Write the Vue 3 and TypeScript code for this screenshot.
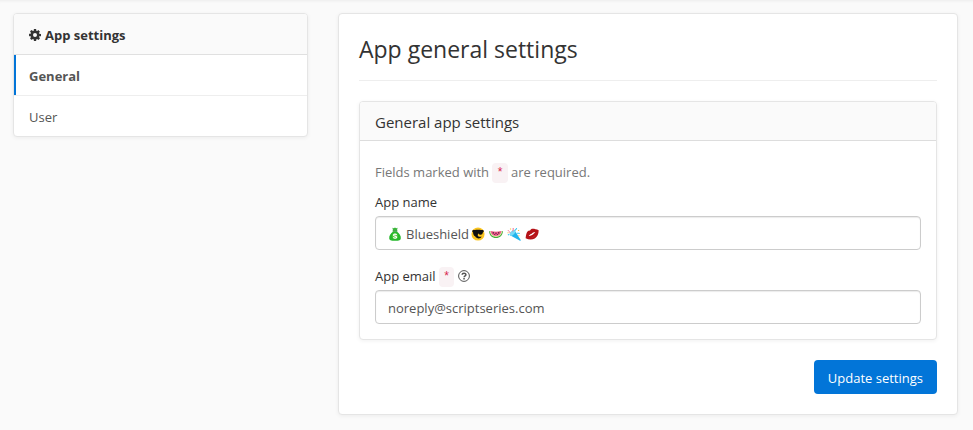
<script setup lang="ts">
import { ref } from 'vue'

interface MenuItem {
  id: string
  label: string
}

const menu: MenuItem[] = [
  { id: 'general', label: 'General' },
  { id: 'user', label: 'User' },
]

const active = ref('general')
const appName = ref('Blueshield')
const appEmail = ref('noreply@scriptseries.com')
</script>

<template>
  <div class="page">
    <nav class="panel sidebar" aria-labelledby="menu-title">
      <div id="menu-title" class="sidebar-head">
        <svg class="cog" viewBox="0 0 1536 1536" aria-hidden="true">
          <path
            fill="currentColor"
            fill-rule="evenodd"
            d="M1024 768a256 256 0 1 0-512 0 256 256 0 0 0 512 0zM1536 659v222c0 15-12 32-28 34l-185 28c-10 32-23 63-39 92 34 48 70 93 107 138 6 7 9 15 9 23 0 9-2 16-8 23-24 33-159 180-194 180-9 0-18-4-26-9l-138-108c-29 15-60 28-91 38-7 60-13 126-28 186-4 16-17 28-34 28H659c-17 0-32-13-34-29l-28-184c-31-10-61-22-90-37l-141 107c-7 6-16 9-25 9s-18-4-25-11c-53-48-123-111-165-169-5-7-7-15-7-23s3-16 8-23c34-46 71-90 105-137-17-32-31-64-41-97l-183-27c-17-3-29-18-29-34V657c0-15 12-32 27-34l186-28c9-32 23-63 39-93-34-48-71-93-107-138-6-7-9-14-9-23s3-16 8-23c24-33 159-179 194-179 9 0 18 4 26 10l138 107c29-15 60-28 91-38 7-60 13-126 28-186 4-16 17-28 34-28h222c17 0 32 13 34 29l28 184c31 10 61 22 90 37l142-107c7-6 15-9 24-9s18 4 25 10c53 49 123 112 165 171 5 6 7 14 7 22s-3 16-8 23c-34 46-71 90-105 137 17 32 31 64 41 96l183 28c17 3 29 18 29 34z"
          />
        </svg>
        <span>App settings</span>
      </div>
      <a
        v-for="item in menu"
        :key="item.id"
        :href="'#' + item.id"
        class="menu-item"
        :class="{ active: active === item.id }"
        @click.prevent="active = item.id"
        >{{ item.label }}</a
      >
    </nav>

    <main class="panel content">
      <h1>App general settings</h1>
      <form @submit.prevent>
        <section class="panel card">
          <h2>General app settings</h2>
          <div class="card-body">
            <p class="note">Fields marked with <code>*</code> are required.</p>

            <div class="field">
              <label for="app-name">App name</label>
              <div class="control emoji-control">
                <svg class="emoji" viewBox="0 0 16 16" aria-hidden="true">
                  <path fill="#3cb53c" d="M5 .8 6.6 1.4 8 .6l1.4.8L11 .8 10.2 4H5.8z" />
                  <path fill="#26b82c" d="M6 5h4c3 2 5 5 4.600 8-.3 2-1.600 2.600-6.600 2.600S1.700 15 1.400 13C1 10 3 7 6 5z" />
                  <path fill="#178c20" d="M5.300 3.800h5.400v1.400H5.300z" />
                  <circle cx="8" cy="10.400" r="3.400" fill="#4fca3a" />
                  <path fill="none" stroke="#fff" stroke-width="1.300" d="M10 8.900C8.800 7.800 6.200 8 6.300 9.400c.1 1.300 3.600.8 3.600 2.200 0 1.300-2.700 1.500-3.900.3" />
                </svg>
                <input id="app-name" v-model="appName" class="name-input" type="text" />
                <svg class="emoji" viewBox="0 0 16 16" aria-hidden="true">
                  <circle cx="8" cy="8" r="7.500" fill="#fbc520" />
                  <path fill="#101010" d="M1.500 4c3-1 10-1 13 0v1.300l-.8.700c-.4 2-1.400 2.800-2.700 2.800-1.400 0-2.100-.6-2.600-1.700L7.700 9c-.2 1.700 1.500 2.600 4.500 1.900-1 2.800-5.900 3-7.500-.2C3 10 2.600 8.300 2.300 6l-.8-.700z" />
                </svg>
                <svg class="emoji" viewBox="0 0 16 16" aria-hidden="true">
                  <path fill="#43a837" d="M0 4.500c4 1.500 12 1.500 16 0-.4 5-3.600 8-8 8s-7.600-3-8-8z" />
                  <path fill="#dcecae" d="M.8 4.500c4 1.200 10.400 1.200 14.400 0-.6 4.400-3.300 6.800-7.200 6.800S1.400 8.900.8 4.500z" />
                  <path fill="#f6578f" d="M1.800 4.600c4 1 8.400 1 12.400 0-.7 3.700-2.900 5.600-6.200 5.600S2.500 8.300 1.800 4.600z" />
                  <path fill="#33262b" d="M4.200 6h1.400v1.300H4.200zM7.300 6.500h1.400v1.300H7.300zM10.400 6h1.400v1.300h-1.400zM5.900 8.200h1.200v1H5.900zM9 8.200h1.200v1H9z" />
                </svg>
                <svg class="emoji" viewBox="0 0 16 16" aria-hidden="true">
                  <path fill="#20b4ed" d="M8.800 4 15.500 14.500c.5 1-.1 1.500-1.100 1L3.500 9.500z" />
                  <ellipse cx="6.200" cy="6.800" rx="4" ry="2.200" fill="#74d9f6" transform="rotate(-46 6.200 6.800)" />
                  <path fill="none" stroke="#ef5d87" stroke-width="1.100" d="M3.500 6.500C3 5 1.800 5 1.200 3.800M6.500 5c.2-1.600 1-2 .5-3.800" />
                  <path fill="none" stroke="#3ec7ee" stroke-width="1.200" d="M8.800 4.500c.2-1.600 2-1.200 2.200-3.300M1 9l1.500-.4M11 7c1.500.6 2.200-.4 3.600.5" />
                  <path fill="#f8bd36" d="M3.400 1.600h1.300v1.300H3.400zM12.500 3.300h1.400v1.400h-1.400zM13 9.300h1.200v1.200H13zM.6 6h1.100v1.200H.6z" />
                </svg>
                <svg class="emoji" viewBox="0 0 16 16" aria-hidden="true">
                  <g transform="rotate(-32 8 8)">
                    <path fill="#b51218" d="M-.8 8.300C1.600 5.400 3.800 2.800 6 2.800c1 0 1.500.6 2 .6s1-.6 2-.6c2.200 0 4.400 2.600 6.800 5.500-2.300 3.600-5.400 5.600-8.800 5.600S1.500 11.900-.8 8.300z" />
                    <path fill="#fff" d="M3.600 8c1.800-.8 3-1 4.400-.5 1.400-.5 2.600-.3 4.400.5-1.800.7-2.800.9-4.400.9S5.400 8.700 3.600 8z" />
                    <path fill="#d03a3a" d="M5 11c2 .8 4 .8 6 0-2 1.500-4 1.500-6 0z" />
                  </g>
                </svg>
              </div>
            </div>

            <div class="field">
              <div class="label-row">
                <label for="app-email">App email <code>*</code></label>
                <svg class="help" viewBox="0 0 12 12" aria-hidden="true">
                  <circle cx="6" cy="6" r="5.400" fill="none" stroke="currentColor" />
                  <path fill="none" stroke="currentColor" stroke-width="1.500" d="M4.100 4.800C4.200 2.700 7.900 2.700 7.900 4.700 7.900 5.900 6.100 5.900 6.100 7.300" />
                  <path fill="currentColor" d="M5.300 8h1.500v1.400H5.300z" />
                </svg>
              </div>
              <input id="app-email" v-model="appEmail" class="control" type="email" required />
            </div>
          </div>
        </section>
        <div class="actions">
          <button type="submit">Update settings</button>
        </div>
      </form>
    </main>
  </div>
</template>

<style>
body {
  margin: 0;
  background: #fafafa;
}
</style>

<style scoped>
.page,
.page * {
  box-sizing: border-box;
}

.page {
  display: grid;
  grid-template-columns: 295fr 620fr;
  gap: 30px;
  align-items: start;
  padding: 13px 15px 15px 13px;
  color: #333;
  font: 13px/20px "Open Sans", "Noto Sans", sans-serif;
  box-shadow: inset 0 3px 3px -2px rgba(0, 0, 0, 0.06);
}

.panel {
  background: #fff;
  border: 1px solid #e5e5e5;
  border-radius: 4px;
  box-shadow: 0 1px 4px rgba(0, 0, 0, 0.06);
}

.sidebar {
  overflow: hidden;
}

.sidebar-head {
  display: flex;
  align-items: center;
  gap: 4px;
  padding: 11px 15px 9px;
  background: #fafafa;
  border-bottom: 1px solid #e0e0e0;
  font-weight: 700;
}

.cog {
  width: 12px;
  height: 12px;
}

.menu-item {
  display: block;
  padding: 11px 15px 9px;
  color: #555;
  text-decoration: none;
}

.menu-item + .menu-item {
  border-top: 1px solid #eee;
}

.menu-item.active {
  padding-left: 13px;
  border-left: 2px solid #0275d8;
  font-weight: 700;
}

.content {
  padding: 20px;
}

h1 {
  margin: 0 0 20px;
  padding-bottom: 16px;
  border-bottom: 1px solid #eee;
  font-size: 23px;
  font-weight: 400;
  line-height: 30px;
}

h2 {
  margin: 0;
  padding: 10px 15px 8px;
  background: #fafafa;
  border-bottom: 1px solid #ddd;
  border-radius: 3px 3px 0 0;
  font-size: 15px;
  font-weight: 400;
  line-height: 20px;
}

.card-body {
  display: grid;
  gap: 16px;
  padding: 21px 15px 15px;
}

.note {
  margin: 0 0 -6px;
  color: #777;
}

.field {
  display: grid;
  gap: 4px;
}

.label-row {
  display: flex;
  align-items: center;
  gap: 4px;
}

code {
  padding: 3px 4px;
  border-radius: 4px;
  background: #f9f2f4;
  color: #d8264f;
  font: 12px "Liberation Mono", monospace;
  vertical-align: 1px;
}

.help {
  width: 12px;
  height: 12px;
  color: #555;
}

.control {
  width: 100%;
  height: 34px;
  padding: 7px 12px 5px;
  border: 1px solid #ccc;
  border-radius: 4px;
  background: #fff;
  box-shadow: inset 0 1px 1px rgba(0, 0, 0, 0.08);
  color: #555;
  font: inherit;
}

.emoji-control {
  display: flex;
  align-items: center;
  gap: 4px;
}

.emoji {
  flex: none;
  width: 14px;
  height: 14px;
}

.name-input {
  width: 64px;
  margin-right: -3px;
  padding: 0;
  border: 0;
  outline: 0;
  background: transparent;
  color: inherit;
  font: inherit;
}

.actions {
  display: flex;
  justify-content: flex-end;
  margin-top: 20px;
}

button {
  height: 34px;
  padding: 1px 14px 0;
  border: 0;
  border-radius: 4px;
  background: #0275d8;
  color: #fff;
  font: inherit;
  cursor: pointer;
}
</style>
